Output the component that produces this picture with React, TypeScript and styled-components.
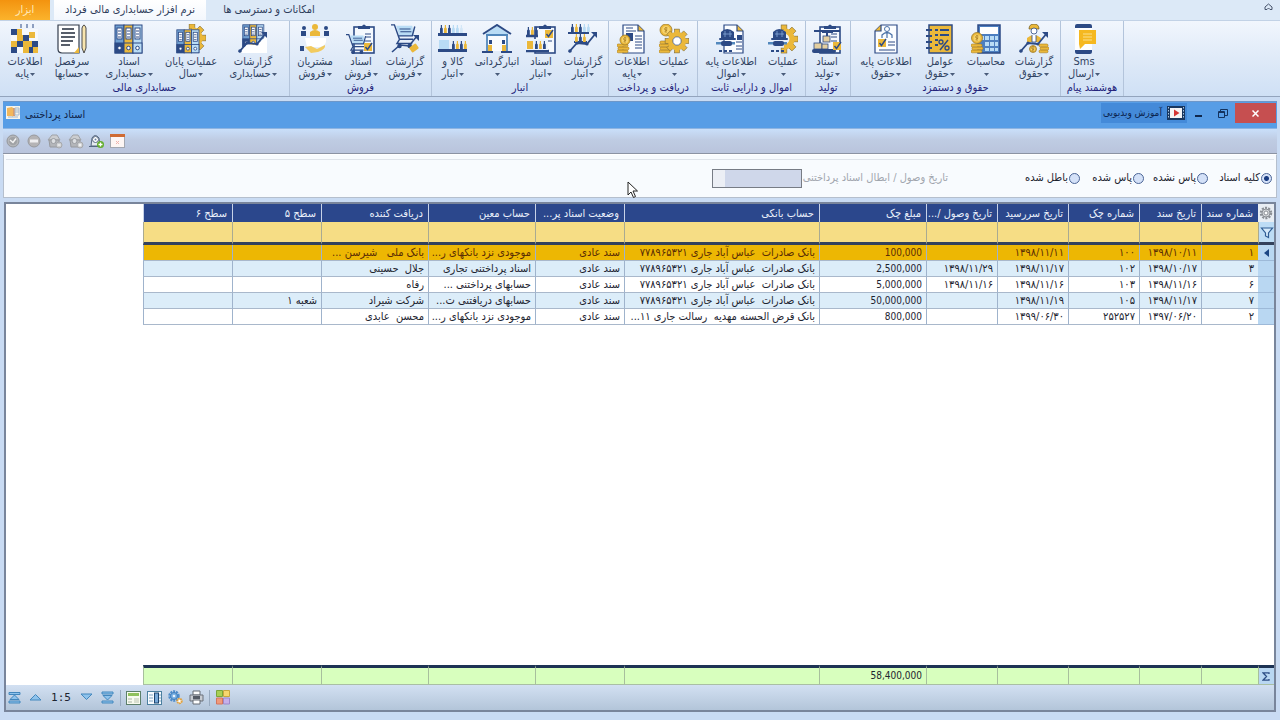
import React from 'react';
import styled, { createGlobalStyle } from 'styled-components';

const NAVY = '#2c4a85';
const GOLD = '#ebb83a';
const SKY = '#b9dcf5';

const GlobalStyle = createGlobalStyle`
  * { box-sizing: border-box; }
  body {
    margin: 0;
    background: #c9dbf3;
    color: #1d2430;
    font-family: 'DejaVu Sans Condensed', 'DejaVu Sans', sans-serif;
    font-size: 11px;
    line-height: 12px;
  }
  button, input { font: inherit; color: inherit; margin: 0; padding: 0; }
`;

const Page = styled.div`
  display: flex;
  flex-direction: column;
  min-height: 100vh;
  padding-bottom: 8px;
`;

/* Ribbon */

const TabBar = styled.nav`
  display: flex;
  align-items: stretch;
  height: 20px;
  background: #dce9f7;
`;

const Tab = styled.button<{ $kind: 'tool' | 'active' | 'plain' }>`
  border: 0;
  white-space: nowrap;
  direction: rtl;
  min-width: ${(p) => (p.$kind === 'tool' ? 50 : p.$kind === 'active' ? 152 : 126)}px;
  margin-right: ${(p) => (p.$kind === 'tool' ? 4 : 0)}px;
  color: ${(p) => (p.$kind === 'tool' ? '#ffe9b8' : '#2e3d5c')};
  background: ${(p) =>
    p.$kind === 'tool'
      ? 'linear-gradient(#f3930f, #fbb32c)'
      : p.$kind === 'active'
        ? 'linear-gradient(#ffffff, #f3f7fd)'
        : 'transparent'};
`;

const CollapseButton = styled.button`
  margin-left: auto;
  width: 24px;
  height: 16px;
  border: 0;
  background: transparent;
`;

const Ribbon = styled.div`
  display: flex;
  height: 77px;
  border-top: 1px solid #c2d2e6;
  border-bottom: 1px solid #93a4bd;
  background: linear-gradient(#f1f6fd, #dfeaf8 50%, #cfe0f5);
`;

const Group = styled.section<{ $width: number }>`
  display: flex;
  flex-direction: column;
  width: ${(p) => p.$width}px;
  flex: none;
  border-right: 1px solid #b3c4db;
`;

const GroupItems = styled.div`
  display: flex;
  height: 60px;
`;

const GroupTitle = styled.h2`
  margin: 0;
  font-size: 11px;
  line-height: 14px;
  font-weight: 400;
  text-align: center;
  color: #23237a;
  direction: rtl;
  white-space: nowrap;
`;

const Item = styled.button<{ $width: number }>`
  display: flex;
  flex-direction: column;
  align-items: center;
  flex: none;
  width: ${(p) => p.$width}px;
  padding-top: 3px;
  border: 0;
  background: transparent;
  color: #2f4261;
  white-space: nowrap;
`;

const ItemIcon = styled.svg`
  width: 30px;
  height: 30px;
  flex: none;
  margin-bottom: 2px;
`;

const ItemLine = styled.span`
  display: flex;
  align-items: center;
  gap: 1px;
  height: 12px;
  line-height: 12px;
`;

const Caret = () => (
  <svg width="5" height="3" viewBox="0 0 5 3" aria-hidden="true">
    <path d="M0 0h5L2.500 3z" fill="#4a5c7a" />
  </svg>
);

/* Drawing parts shared by the ribbon icons */

const Binders = ({ x = 0, y = 0, s = 1 }: { x?: number; y?: number; s?: number }) => (
  <g transform={`translate(${x} ${y}) scale(${s})`} stroke={NAVY} strokeWidth="1">
    {[['#6f9fd0', 1], [GOLD, 10], [SKY, 19]].map(([c, bx]) => (
      <g key={String(bx)}>
        <rect x={bx} y="1" width="9" height="28" fill={String(c)} />
        <rect x={Number(bx) + 2} y="4" width="5" height="11" fill="#fff" />
        <path d={`M${Number(bx) + 3} 7h3M${Number(bx) + 3} 10h3M${Number(bx) + 3} 13h3`} />
        <rect x={Number(bx)} y="19" width="9" height="10" fill={c === '#6f9fd0' ? NAVY : String(c)} />
        <circle cx={Number(bx) + 4.5} cy="24" r="1.800" fill="#fff" />
      </g>
    ))}
  </g>
);

const Clipboard = ({ x = 6, y = 0 }: { x?: number; y?: number }) => (
  <g transform={`translate(${x} ${y})`}>
    <rect x="1" y="3" width="20" height="26" fill="#f5f9fe" stroke={NAVY} strokeWidth="1.600" />
    <path d="M5 5V2h4q2-3 4 0h4v3z" fill={NAVY} />
    <path d="M12 10h6M12 13h6M12 17h6" stroke={NAVY} strokeWidth="1" />
  </g>
);

const Check = ({ x, y }: { x: number; y: number }) => (
  <g transform={`translate(${x} ${y})`}>
    <rect width="8" height="8" fill={GOLD} />
    <path d="M1.500 4l2 2.500L8 0" fill="none" stroke={NAVY} strokeWidth="1.400" />
  </g>
);

const Trend = () => (
  <g>
    <path d="M1 28L9 19l10 1L28 9" fill="none" stroke={NAVY} strokeWidth="1.800" />
    <path d="M23 8h6v6z" fill={NAVY} />
    <circle cx="2" cy="27" r="1.800" fill={NAVY} />
    <circle cx="9" cy="19" r="1.600" fill={NAVY} />
    <circle cx="19" cy="20" r="1.600" fill={NAVY} />
  </g>
);

const Gear = ({ x, y, r, half }: { x: number; y: number; r: number; half?: boolean }) => (
  <g transform={`translate(${x} ${y})`}>
    {(half ? [-90, -45, 0, 45, 90] : [0, 45, 90, 135, 180, 225, 270, 315]).map((a) => (
      <rect key={a} x={r * 0.7} y={-r * 0.22} width={r * 0.38} height={r * 0.44} fill={GOLD} stroke="#7d6a35" strokeWidth="0.600" transform={`rotate(${a})`} />
    ))}
    {half ? (
      <path d={`M0 ${-r * 0.62}A${r * 0.62} ${r * 0.62} 0 0 1 0 ${r * 0.62}`} fill="none" stroke={GOLD} strokeWidth={r * 0.4} />
    ) : (
      <circle r={r * 0.6} fill="#fff" stroke={GOLD} strokeWidth={r * 0.46} />
    )}
    {!half && <circle r={r * 0.38} fill="#fff" stroke={NAVY} strokeWidth="0.700" />}
  </g>
);

const Coins = ({ x, y, n = 3, w = 11 }: { x: number; y: number; n?: number; w?: number }) => (
  <g>
    {Array.from({ length: n }, (_, i) => (
      <rect key={i} x={x + (i % 2)} y={y - i * 3} width={w} height="2.800" rx="1.300" fill={GOLD} stroke="#a87c1c" strokeWidth="0.600" />
    ))}
  </g>
);

const Coin = ({ x, y, r }: { x: number; y: number; r: number }) => (
  <g>
    <circle cx={x} cy={y} r={r} fill={GOLD} stroke="#9b7a2b" strokeWidth="0.800" />
    <circle cx={x} cy={y} r={r * 0.65} fill="#f7d36b" />
    <path d={`M${x + 1.5} ${y - 2}q-3-1-3 .8t2 1.200t-2 1.800M${x} ${y - 3}v6`} fill="none" stroke="#a87c1c" strokeWidth="0.700" />
  </g>
);

const Bottles = ({ x, y, c }: { x: number; y: number; c: string[] }) => (
  <g transform={`translate(${x} ${y})`}>
    {c.map((f, i) => (
      <path key={i} d={`M${i * 4 + 1} 8V3.500l.8-1V0h1.200v2.500l.8 1V8z`} fill={f} />
    ))}
  </g>
);

const Doc = ({ x = 3, y = 0, w = 22, fold = 'right' }: { x?: number; y?: number; w?: number; fold?: string }) => (
  <g transform={`translate(${x} ${y})`} stroke={NAVY} strokeWidth="1.200" fill="#fbfdff">
    {fold === 'right' ? (
      <>
        <path d={`M1 1h${w - 8}l6 6v22H1z`} />
        <path d={`M${w - 7} 1v6h6`} fill={GOLD} />
      </>
    ) : (
      <>
        <path d={`M7 1h${w - 8}v28H1V7z`} />
        <path d="M7 1v6H1" fill={GOLD} />
      </>
    )}
  </g>
);

const Helmet = ({ x, y }: { x: number; y: number }) => (
  <g transform={`translate(${x} ${y})`} fill={NAVY}>
    <path d="M2 10V4q6-6 13 0v6z" />
    <rect x="0" y="10" width="17" height="2" rx="1" />
    <path d="M6 3v6M11 3v6M4 6h9" stroke="#85a8d8" strokeWidth="0.800" />
    <rect x="-3" y="14" width="19" height="2.500" fill="#5288bd" />
    <rect x="2" y="13" width="11" height="5" rx="2" />
    <path d="M0 22h3v2H0zM5 22h3v2H5zM10 22h3v2h-3z" />
  </g>
);

const Cart = ({ x, y, s = 1 }: { x: number; y: number; s?: number }) => (
  <g transform={`translate(${x} ${y}) scale(${s})`} fill="none" stroke={NAVY} strokeWidth="1.700">
    <path d="M6 2h19l2 12H10z" fill={SKY} stroke="none" />
    <path d="M0 1h4l6 17h16M9 14h16L28 3M10 18l-3 5h18" />
    <path d="M10 6h13M11 9h13" strokeWidth="1.200" />
    <circle cx="10" cy="26" r="1.800" fill={NAVY} />
    <circle cx="22" cy="26" r="1.800" fill={NAVY} />
  </g>
);

const icons: Record<string, React.ReactNode> = {
  mosaic: (
    <g>
      <rect x="1" y="5" width="27" height="24" fill="#f5f8fc" />
      <path d="M1 5h6v6H1zM7 17h6v6H7zM13 11h6v6h-6zM22 17h6v6h-6zM1 23h6v6H1zM19 23h4v6h-4z" fill={NAVY} />
      <path d="M7 11h6v6H7zM1 17h6v6H1zM13 17h9v6h-9zM19 8h6v6h-6zM13 23h6v6h-6zM7 5h5v6H7zM23 23h5v6h-5z" fill={GOLD} />
      <path d="M11 0v4M17 0v4M23 0v4" stroke={NAVY} strokeWidth="1" />
    </g>
  ),
  ledger: (
    <g>
      <path d="M1 1h21v28H5q-4 0-4-4z" fill="#fff" stroke="#333c4c" strokeWidth="1.200" />
      <path d="M5 5h12M4 9h14M4 13h14M4 17h12M4 21h9" stroke="#222b3b" strokeWidth="1.500" />
      <path d="M17 29l5-6v6z" fill={GOLD} />
      <path d="M25 4q2-6 4 0v20l-2 5-2-5z" fill="#f8e5ae" stroke="#4b4b4b" strokeWidth="1" />
    </g>
  ),
  binders: <Binders />,
  yearEnd: (
    <g>
      <Gear x={16} y={14} r={13} half />
      <Binders x={0} y={5} s={0.82} />
    </g>
  ),
  accReports: (
    <g>
      <Binders x={4} y={0} s={0.78} />
      <path d="M2 29L9 20l10 1L29 11V29z" fill="#fff" />
      <Trend />
    </g>
  ),
  customers: (
    <g>
      <g fill={NAVY}><circle cx="4" cy="4" r="2" /><path d="M1 7h5v5H1z" /><circle cx="26" cy="4" r="2" /><path d="M24 7h5v5h-5z" /></g>
      <g fill={GOLD}><circle cx="15" cy="3" r="3" /><path d="M10 8q5-4 10 0v4H10z" /></g>
      <path d="M5 14h21q1 8-6 9H7z" fill="#fff" />
      <path d="M5 23l6-1 6 3 8-4q1 4-7 7l-7 1z" fill="#f2cb5f" />
      <path d="M0 22h4v5H0z" fill={NAVY} />
    </g>
  ),
  saleDocs: (
    <g><Clipboard x={7} /><Cart x={0} y={10} s={0.7} /><Check x={18} y={19} /></g>
  ),
  saleReports: (
    <g><Cart x={1} y={0} s={0.85} /><path d="M2 28l8-7 9 1 8-10" fill="none" stroke={NAVY} strokeWidth="1.600" /><path d="M23 11h6v6z" fill={NAVY} /><rect x="20" y="21" width="8" height="6" rx="1" fill={GOLD} transform="rotate(-35 24 24)" /></g>
  ),
  shelf: (
    <g>
      <Bottles x={1} y={1} c={[NAVY, GOLD, NAVY, SKY, SKY, '#d4e7f7']} />
      <rect x="0" y="9" width="29" height="3" fill={NAVY} />
      <rect x="1" y="16" width="10" height="9" fill={SKY} />
      <Bottles x={13} y={17} c={[NAVY, GOLD, NAVY, GOLD]} />
      <rect x="0" y="25" width="29" height="3" fill={NAVY} />
    </g>
  ),
  warehouse: (
    <g>
      <path d="M3 10L15 2l12 8z" fill={SKY} />
      <path d="M1 10L15 1l14 9" fill="none" stroke={NAVY} strokeWidth="2" />
      <rect x="4" y="11" width="22" height="16" fill="#f9fbfe" />
      <path d="M4 11h22M5 11v17M25 11v17" stroke="#5187bb" strokeWidth="1.800" />
      <path d="M7 16h3v4H7zM20 16h3v4h-3z" fill={NAVY} />
      <path d="M6 21h4v6H6zM20 21h4v6h-4z" fill={GOLD} />
      <path d="M0 28h11M19 28h11" stroke={NAVY} strokeWidth="2" />
    </g>
  ),
  stockDocs: (
    <g>
      <Clipboard x={8} />
      <Bottles x={0} y={3} c={[NAVY, GOLD, NAVY]} />
      <path d="M0 12h12M0 27h23" stroke={NAVY} strokeWidth="2.500" />
      <rect x="0" y="15" width="22" height="11" fill="#eaf3fc" /><rect x="1" y="17" width="6" height="8" fill={GOLD} />
      <Bottles x={8} y={17} c={[NAVY, GOLD, NAVY]} /><Check x={19} y={6} />
    </g>
  ),
  stockReports: (
    <g>
      <Bottles x={2} y={0} c={[NAVY, GOLD, NAVY, SKY, SKY]} />
      <path d="M0 9h21M6 18h13" stroke={NAVY} strokeWidth="2" />
      <Bottles x={6} y={10} c={[GOLD, NAVY, GOLD]} /><Trend />
    </g>
  ),
  cashDoc: (
    <g>
      <Doc x={5} w={23} />
      <path d="M9 4h7M9 7h10M18 12h7M18 15h7M18 18h7M18 21h7M18 24h7" stroke={NAVY} strokeWidth="1" />
      <rect x="9" y="9" width="7" height="8" fill={NAVY} />
      <Coins x={0} y={26} n={3} /><Coin x={8} y={16} r={5} />
    </g>
  ),
  cashOps: (
    <g><Coins x={0} y={26} n={4} /><Coin x={7} y={6} r={6} /><Gear x={18} y={17} r={11} /></g>
  ),
  assetDoc: (
    <g><Doc x={7} w={21} /><path d="M20 18h6M20 22h6M20 25h6" stroke={NAVY} /><rect x="21" y="11" width="5" height="5" fill={NAVY} /><Helmet x={3} y={4} /></g>
  ),
  assetOps: (
    <g><Gear x={16} y={15} r={13} half /><Helmet x={3} y={4} /></g>
  ),
  production: (
    <g>
      <Clipboard x={7} />
      <rect x="2" y="6" width="26" height="2" fill={NAVY} />
      <path d="M15 7v5M10 8h11" stroke={NAVY} strokeWidth="2" />
      <g fill="#e4cf9f" stroke={NAVY} strokeWidth="0.800"><rect x="11" y="12" width="7" height="6" /><rect x="2" y="19" width="8" height="6" /><rect x="10" y="20" width="6" height="5" /></g>
      <rect x="0" y="25" width="24" height="4" rx="2" fill={NAVY} /><Check x={21} y={18} />
    </g>
  ),
  payrollInfo: (
    <g>
      <Doc x={3} w={24} fold="left" />
      <circle cx="16" cy="5" r="2.500" fill="none" stroke="#4b72a8" /><path d="M11 14v-3q5-5 10 0v3M16 9v5" fill="none" stroke="#4b72a8" strokeWidth="1.200" />
      <Check x={7} y={15} /><path d="M17 18h7M17 21h7M8 26h16" stroke={NAVY} />
    </g>
  ),
  factors: (
    <g>
      <rect x="4" y="1" width="23" height="28" fill={GOLD} stroke={NAVY} strokeWidth="1.500" />
      <path d="M1 6h6M1 12h6M1 18h6M1 24h6" stroke={NAVY} strokeWidth="2" />
      <path d="M10 6h3M15 6h9M10 11h3M15 11h9M10 16h3M10 21h3" stroke={NAVY} strokeWidth="1.800" />
      <path d="M23 16l-8 10" stroke={NAVY} strokeWidth="1.500" /><circle cx="16" cy="18" r="2" fill="none" stroke={NAVY} strokeWidth="1.300" /><circle cx="22" cy="24" r="2" fill="none" stroke={NAVY} strokeWidth="1.300" />
    </g>
  ),
  calculator: (
    <g>
      <rect x="7" y="1" width="22" height="28" fill="#4d7fc0" stroke={NAVY} strokeWidth="1.500" />
      <rect x="9" y="3" width="18" height="7" fill="#fff" />
      <path d="M9 12h4v4H9zM14 12h4v4h-4zM19 12h4v4h-4zM24 12h3v4h-3zM14 18h4v4h-4zM19 18h4v4h-4zM24 18h3v4h-3zM14 24h4v3h-4zM19 24h4v3h-4zM24 24h3v3h-3z" fill="#b9dcf5" />
      <Coins x={0} y={26} n={3} /><Coin x={6} y={14} r={5.5} />
    </g>
  ),
  payReports: (
    <g>
      <path d="M10 5q0-5 5-5t5 5z" fill={GOLD} stroke="#6b5721" strokeWidth="0.700" /><circle cx="15" cy="7" r="3" fill="#fff" stroke={NAVY} strokeWidth="0.800" />
      <path d="M8 18v-4q7-6 14 0v4z" fill={GOLD} /><path d="M13 11v7h4v-7" fill="#fff" stroke={NAVY} strokeWidth="0.800" />
      <Trend /><Coin x={14} y={25} r={3.5} /><Coins x={20} y={26} n={3} w={9} />
    </g>
  ),
  phone: (
    <g>
      <rect x="6" y="0" width="17" height="30" rx="2" fill="#fdfeff" />
      <path d="M6 4V2q0-2 2-2h13q2 0 2 2v2zM6 26h17v2q0 2-2 2H8q-2 0-2-2z" fill={NAVY} />
      <path d="M10 6h17v14H16l-5 5-1-5z" fill="#f5b820" /><path d="M14 10h9M14 13h9M14 16h9" stroke="#fbe08e" strokeWidth="1" />
    </g>
  ),
};

type RibbonItem = [icon: string, width: number, first: string, second?: string];

const groups: { title: string; width: number; items: RibbonItem[] }[] = [
  { title: 'حسابداری مالی', width: 290, items: [['mosaic', 50, 'اطلاعات', 'پایه'], ['ledger', 44, 'سرفصل', 'حسابها'], ['binders', 70, 'اسناد', 'حسابداری'], ['yearEnd', 54, 'عملیات پایان', 'سال'], ['accReports', 70, 'گزارشات', 'حسابداری']] },
  { title: 'فروش', width: 142, items: [['customers', 50, 'مشتریان', 'فروش'], ['saleDocs', 42, 'اسناد', 'فروش'], ['saleReports', 46, 'گزارشات', 'فروش']] },
  { title: 'انبار', width: 177, items: [['shelf', 42, 'کالا و', 'انبار'], ['warehouse', 46, 'انبارگردانی'], ['stockDocs', 42, 'اسناد', 'انبار'], ['stockReports', 42, 'گزارشات', 'انبار']] },
  { title: 'دریافت و پرداخت', width: 89, items: [['cashDoc', 46, 'اطلاعات', 'پایه'], ['cashOps', 38, 'عملیات']] },
  { title: 'اموال و دارایی ثابت', width: 108, items: [['assetDoc', 66, 'اطلاعات پایه', 'اموال'], ['assetOps', 38, 'عملیات']] },
  { title: 'تولید', width: 45, items: [['production', 42, 'اسناد', 'تولید']] },
  { title: 'حقوق و دستمزد', width: 210, items: [['payrollInfo', 70, 'اطلاعات پایه', 'حقوق'], ['factors', 38, 'عوامل', 'حقوق'], ['calculator', 54, 'محاسبات'], ['payReports', 42, 'گزارشات', 'حقوق']] },
  { title: 'هوشمند پیام', width: 63, items: [['phone', 46, 'Sms', 'ارسال']] },
];

/* Document window */

const Window = styled.main`
  display: flex;
  flex-direction: column;
  flex: 1;
  margin: 4px 3px 0;
`;

const TitleBar = styled.header`
  display: flex;
  align-items: flex-start;
  height: 28px;
  padding: 1px 1px 0 3px;
  background: #579de6;
  border-top: 1px solid #6d97c9;
  border-bottom: 1px solid #8db4e2;
`;

const Title = styled.h1`
  margin: 5px auto 0 5px;
  font-size: 11px;
  line-height: 14px;
  font-weight: 400;
  color: #10254a;
  direction: rtl;
`;

const TitleIcon = styled.svg`
  margin-top: 3px;
`;

const VideoButton = styled.button`
  display: flex;
  align-items: center;
  justify-content: space-between;
  width: 86px;
  height: 20px;
  padding: 0 2px;
  border: 0;
  background: #448ad9;
  color: #0c2550;
  font-size: 10px;
  white-space: nowrap;
`;

const WindowButton = styled.button<{ $close?: boolean }>`
  display: flex;
  align-items: center;
  justify-content: center;
  width: ${(p) => (p.$close ? 41 : 24)}px;
  height: 20px;
  border: 0;
  background: ${(p) => (p.$close ? '#c64f50' : 'transparent')};
`;

const ToolBar = styled.div`
  display: flex;
  align-items: center;
  gap: 4px;
  height: 25px;
  padding-left: 1px;
  background: linear-gradient(#c9dffa, #bfcce3 45%, #b9c4dc);
  border-bottom: 1px solid #8b93a3;
`;

const IconButton = styled.button`
  display: flex;
  align-items: center;
  justify-content: center;
  flex: none;
  width: 17px;
  height: 18px;
  border: 0;
  background: transparent;
`;

const FilterPanel = styled.form`
  position: relative;
  display: flex;
  align-items: center;
  direction: rtl;
  height: 44px;
  padding: 4px 4px 0;
  background: #f8fbfe;
  border: 1px solid #b5bfcd;
  border-top-color: #fff;
`;

const FilterRule = styled.div`
  position: absolute;
  inset: 4px 2px auto;
  border-top: 1px solid #dfe4ea;
`;

const Option = styled.label`
  display: flex;
  align-items: center;
  gap: 1px;
  width: 64px;
  white-space: nowrap;
`;

const Radio = styled.input`
  appearance: none;
  flex: none;
  width: 11px;
  height: 11px;
  border: 1px solid #4b6596;
  border-radius: 50%;
  background: #d4e1f8;
  &:checked {
    background: radial-gradient(circle, #173a80 0 2px, #d4e1f8 3px);
  }
`;

const DateLabel = styled.label`
  margin-right: 68px;
  margin-left: 2px;
  width: 144px;
  color: #a1a6ae;
  white-space: nowrap;
`;

const DateInput = styled.input`
  width: 90px;
  height: 19px;
  border: 1px solid #777c85;
  background: linear-gradient(to right, #eceff5 12px, #cfd7ea 12px);
`;

const Pointer = styled.svg`
  position: absolute;
  left: 49%;
  top: 26px;
  z-index: 2;
`;

const GridPanel = styled.section`
  display: flex;
  flex-direction: column;
  flex: 1;
  margin: 4px 1px 0;
  border: 2px solid #79859b;
  background: #fff;
`;

const GridBody = styled.div`
  flex: 1;
  direction: rtl;
`;

const TotalsStrip = styled.div`
  direction: rtl;
`;

const Table = styled.table`
  direction: rtl;
  table-layout: fixed;
  width: 1131px;
  border-collapse: separate;
  border-spacing: 0;
`;

const HeadCell = styled.th`
  height: 18px;
  padding: 1px 5px 0;
  border-left: 1px solid #c7d2e8;
  background: #2b478c;
  color: #e9effa;
  font-weight: 400;
  text-align: right;
  white-space: pre;
  overflow: hidden;
`;

const CornerCell = styled.th`
  padding: 0;
  background: #e8edf3;
  line-height: 0;
`;

const FilterCell = styled.td<{ $mark?: boolean }>`
  height: 23px;
  padding: 0;
  background: ${(p) => (p.$mark ? '#bddcf5' : '#f6dd85')};
  border-left: 1px solid #a9aa92;
  border-bottom: 3px solid #33415c;
  line-height: 0;
`;

const FilterInput = styled.input`
  display: block;
  width: 100%;
  height: 19px;
  border: 0;
  background: transparent;
`;

const Row = styled.tr<{ $tone: 'selected' | 'alt' | 'plain' }>`
  background: ${(p) => (p.$tone === 'selected' ? '#edb703' : p.$tone === 'alt' ? '#dcedf9' : '#ffffff')};
  color: ${(p) => (p.$tone === 'selected' ? '#5a2d05' : '#1d2430')};
`;

const Cell = styled.td`
  height: 16px;
  padding: 0 4px;
  border-left: 1px solid #9fb3cc;
  border-bottom: 1px solid #a9b8cb;
  line-height: 15px;
  text-align: right;
  white-space: pre;
  overflow: hidden;
`;

const MarkCell = styled.th`
  padding: 0;
  background: #b9d7f2;
  border-bottom: 1px solid #9db9d8;
  line-height: 0;
`;

const Amount = styled.span`
  font-size: 10px;
  direction: ltr;
`;

const TotalCell = styled.td<{ $mark?: boolean }>`
  height: 20px;
  padding: 0 4px;
  border-top: 3px solid #1d3354;
  border-left: 1px solid #a7bf9d;
  border-bottom: 1px solid #a9bfa4;
  background: ${(p) => (p.$mark ? '#b9d7f2' : '#d8ffbe')};
  text-align: right;
  vertical-align: middle;

  svg { display: block; }
`;

const Navigator = styled.footer`
  display: flex;
  align-items: center;
  gap: 4px;
  height: 25px;
  background: linear-gradient(#d2e0f2, #b3c5d9);
`;

const Counter = styled.output`
  width: 26px;
  text-align: center;
  white-space: nowrap;
  font-family: 'DejaVu Sans Mono', monospace;
`;

const Divider = styled.span`
  width: 1px;
  height: 16px;
  background: #98aabf;
`;

const Nav = ({ label, d }: { label: string; d: string }) => (
  <IconButton type="button" aria-label={label}>
    <svg width="13" height="13" viewBox="0 0 13 13">
      <path d={d} fill="#8fc3ec" stroke="#4387bd" strokeWidth="1" />
    </svg>
  </IconButton>
);

const widths = [16, 57, 62, 71, 71, 71, 107, 195, 89, 107, 107, 89, 89];
const heads = ['شماره سند', 'تاریخ سند', 'شماره چک', 'تاریخ سررسید', 'تاریخ وصول /...', 'مبلغ چک', 'حساب بانکی', 'وضعیت اسناد پر...', 'حساب معین', 'دریافت کننده', 'سطح ۵', 'سطح ۶'];
const BANK = 'بانک صادرات  عباس آباد جاری ۷۷۸۹۶۵۳۲۱';
const rows = [
  ['۱', '۱۳۹۸/۱۰/۱۱', '۱۰۰', '۱۳۹۸/۱۱/۱۱', '', '100,000', BANK, 'سند عادی', 'موجودی نزد بانکهای ر...', 'بانک ملی   شیرسن ...', '', ''],
  ['۳', '۱۳۹۸/۱۰/۱۷', '۱۰۲', '۱۳۹۸/۱۱/۱۷', '۱۳۹۸/۱۱/۲۹', '2,500,000', BANK, 'سند عادی', 'اسناد پرداختنی تجاری', 'جلال  حسینی', '', ''],
  ['۶', '۱۳۹۸/۱۱/۱۶', '۱۰۳', '۱۳۹۸/۱۱/۱۶', '۱۳۹۸/۱۱/۱۶', '5,000,000', BANK, 'سند عادی', 'حسابهای پرداختنی ...', 'رفاه', '', ''],
  ['۷', '۱۳۹۸/۱۱/۱۷', '۱۰۵', '۱۳۹۸/۱۱/۱۹', '', '50,000,000', BANK, 'سند عادی', 'حسابهای دریافتنی ت...', 'شرکت شیراد', 'شعبه ۱', ''],
  ['۲', '۱۳۹۷/۰۶/۲۰', '۲۵۲۵۲۷', '۱۳۹۹/۰۶/۳۰', '', '800,000', 'بانک قرض الحسنه مهدیه  رسالت جاری ۱۱...', 'سند عادی', 'موجودی نزد بانکهای ر...', 'محسن  عابدی', '', ''],
];

const Columns = () => (
  <colgroup>
    {widths.map((w, i) => (
      <col key={i} width={w} />
    ))}
  </colgroup>
);

export default function App() {
  return (
    <Page>
      <GlobalStyle />
      <TabBar>
        <Tab $kind="tool">ابزار</Tab>
        <Tab $kind="active">نرم افزار حسابداری مالی فرداد</Tab>
        <Tab $kind="plain">امکانات و دسترسی ها</Tab>
        <CollapseButton aria-label="جمع کردن">
          <svg width="9" height="8" viewBox="0 0 9 8" fill="none" stroke="#46536b">
            <path d="M1 4l3.500-3L8 4v2.500H6L4.500 5 3 6.500H1z" />
          </svg>
        </CollapseButton>
      </TabBar>
      <Ribbon>
        {groups.map((g) => (
          <Group key={g.title} $width={g.width}>
            <GroupItems>
              {g.items.map(([icon, width, first, second]) => (
                <Item key={icon} $width={width}>
                  <ItemIcon viewBox="0 0 30 30" aria-hidden="true">{icons[icon]}</ItemIcon>
                  <ItemLine dir="auto">{first}</ItemLine>
                  <ItemLine>
                    {second && <span>{second}</span>}
                    <Caret />
                  </ItemLine>
                </Item>
              ))}
            </GroupItems>
            <GroupTitle>{g.title}</GroupTitle>
          </Group>
        ))}
      </Ribbon>

      <Window>
        <TitleBar>
          <TitleIcon width="14" height="13" viewBox="0 0 14 13">
            <rect width="14" height="13" fill="#f6f3ea" />
            <path d="M1 10V2l5-1 1 1v9L6 10z" fill="#f2b75b" />
            <path d="M7 2h2v8H7z" fill="#d99b6c" />
            <path d="M9 2h4v7H9zM9 4h4M9 6h4M2 11h10" stroke="#a4b9cf" fill="none" />
          </TitleIcon>
          <Title>اسناد پرداختنی</Title>
          <VideoButton type="button">
            <span dir="rtl">آموزش ویدیویی</span>
            <svg width="18" height="14" viewBox="0 0 18 14">
              <rect width="18" height="14" fill="#19375f" />
              <rect x="3" y="2" width="12" height="10" fill="#f4f4f6" />
              <path d="M7 3.500L12.500 7 7 10.500z" fill="#d43535" />
              <path d="M1.500 1v12M16.500 1v12" stroke="#a9c6e4" strokeDasharray="1.500 1.500" />
            </svg>
          </VideoButton>
          <WindowButton type="button" aria-label="کوچک کردن">
            <svg width="8" height="12" viewBox="0 0 8 12"><rect y="8" width="7" height="2" fill="#10284d" /></svg>
          </WindowButton>
          <WindowButton type="button" aria-label="بازگرداندن">
            <svg width="10" height="9" viewBox="0 0 10 9" fill="none" stroke="#14335e">
              <path d="M.5 2.500h6v6h-6zM2.500 2.500v-2h7v6h-3M.5 3.500h6" />
            </svg>
          </WindowButton>
          <WindowButton type="button" $close aria-label="بستن">
            <svg width="7" height="7" viewBox="0 0 7 7"><path d="M.5.5l6 6M6.500.5l-6 6" stroke="#fff" strokeWidth="1.500" /></svg>
          </WindowButton>
        </TitleBar>

        <ToolBar>
          <IconButton type="button" aria-label="تایید">
            <svg width="14" height="14" viewBox="0 0 14 14"><circle cx="7" cy="7" r="6" fill="#b4b6b9" stroke="#94979c" /><circle cx="7" cy="7" r="4" fill="#a0a2a5" /><path d="M4 6l3 2.500 3-4" fill="none" stroke="#f2f2f2" strokeWidth="1.500" /></svg>
          </IconButton>
          <IconButton type="button" aria-label="حذف">
            <svg width="14" height="14" viewBox="0 0 14 14"><circle cx="7" cy="7" r="6" fill="#b4b3b5" stroke="#98999d" /><rect x="3" y="5.500" width="8" height="3" fill="#eeeef0" /></svg>
          </IconButton>
          {['برداشتن', 'افزودن'].map((label, i) => (
            <IconButton key={label} type="button" aria-label={label}>
              <svg width="16" height="15" viewBox="0 0 16 15"><path d="M1 6l4-5h5l3 5z" fill="#cbcdd0" stroke="#9fa2a7" /><path d="M2 6h10v7H3z" fill="#b4b6ba" stroke="#97999e" /><circle cx="6.500" cy="7" r="2.500" fill="#dddfe2" stroke="#999ca1" /><circle cx="12" cy="11" r="3" fill="#c9cbce" stroke="#a6a8ac" />{i === 0 ? <path d="M10.500 11h3" stroke="#fff" /> : <path d="M10.500 11h3M12 9.500v3" stroke="#fff" />}</svg>
            </IconButton>
          ))}
          <IconButton type="button" aria-label="سند جدید">
            <svg width="15" height="15" viewBox="0 0 15 15"><path d="M2 12L3 4q3-5 7 0l1 8z" fill="#e6ebf0" stroke="#546680" /><circle cx="6.500" cy="5.500" r="3" fill="#fff" stroke="#546680" /><circle cx="6.500" cy="5.500" r="1" fill="#6c82a0" /><path d="M0 12.500h12" stroke="#546680" /><circle cx="11.500" cy="10.500" r="3.500" fill="#63ad2d" /><path d="M9.500 10.500h4M11.500 8.500v4" stroke="#fff" strokeWidth="1.300" /></svg>
          </IconButton>
          <IconButton type="button" aria-label="بستن فرم">
            <svg width="15" height="14" viewBox="0 0 15 14"><rect x=".5" y=".5" width="14" height="13" fill="#fdf6f4" stroke="#a3a7b0" /><rect width="15" height="3" fill="#cf6b33" /><path d="M6 7l3 3M9 7l-3 3" stroke="#efb3ac" /></svg>
          </IconButton>
        </ToolBar>

        <FilterPanel>
          <FilterRule />
          {['کلیه اسناد', 'پاس نشده', 'پاس شده', 'باطل شده'].map((label, i) => (
            <Option key={label}>
              <Radio type="radio" name="status" defaultChecked={i === 0} />
              {label}
            </Option>
          ))}
          <DateLabel htmlFor="due">تاریخ وصول / ابطال اسناد پرداختنی</DateLabel>
          <DateInput id="due" type="text" disabled />
          <Pointer width="12" height="18" viewBox="0 0 12 18" aria-hidden="true">
            <path d="M1 1v13l3-3 2.500 5.500 2-1L6 10h4.500z" fill="#fff" stroke="#222" />
          </Pointer>
        </FilterPanel>

        <GridPanel>
          <GridBody>
            <Table>
              <Columns />
              <thead>
                <tr>
                  <CornerCell aria-label="تنظیمات">
                    <svg width="14" height="14" viewBox="0 0 14 14" fill="none" stroke="#8b8f95"><circle cx="7" cy="7" r="5" strokeWidth="2.500" strokeDasharray="2 1.140" /><circle cx="7" cy="7" r="4" fill="#d6d9dc" /><circle cx="7" cy="7" r="2" fill="#fff" /></svg>
                  </CornerCell>
                  {heads.map((h) => <HeadCell key={h} scope="col">{h}</HeadCell>)}
                </tr>
                <tr>
                  <FilterCell $mark>
                    <svg width="14" height="13" viewBox="0 0 14 13"><path d="M1.500 2h11L8.500 7v4.500l-3-1.500V7z" fill="#d4e9fa" stroke="#2e5c94" strokeWidth="1.200" /></svg>
                  </FilterCell>
                  {heads.map((h) => <FilterCell key={h}><FilterInput type="text" aria-label={h} /></FilterCell>)}
                </tr>
              </thead>
              <tbody>
                {rows.map((r, i) => (
                  <Row key={i} $tone={i === 0 ? 'selected' : i % 2 ? 'alt' : 'plain'}>
                    <MarkCell scope="row">
                      {i === 0 && <svg width="5" height="8" viewBox="0 0 5 8" role="img" aria-label="سطر جاری"><path d="M5 0v8L0 4z" fill="#1c4684" /></svg>}
                    </MarkCell>
                    {r.map((c, j) => <Cell key={j}>{j === 5 ? <Amount>{c}</Amount> : c}</Cell>)}
                  </Row>
                ))}
              </tbody>
            </Table>
          </GridBody>
          <TotalsStrip>
            <Table>
              <Columns />
              <tbody>
                <tr>
                  <TotalCell $mark aria-label="جمع">
                    <svg width="8" height="9" viewBox="0 0 8 9"><path d="M7 2V.8H1L4.500 4.500 1 8.200h6V7" fill="none" stroke="#2e4f86" strokeWidth="1.300" /></svg>
                  </TotalCell>
                  {heads.map((h, j) => <TotalCell key={h}>{j === 5 && <Amount>58,400,000</Amount>}</TotalCell>)}
                </tr>
              </tbody>
            </Table>
          </TotalsStrip>
          <Navigator>
            <Nav label="اولین" d="M1 1.500h11v2H1zM6.500 4L11 8.500H2zM1 10h11v2H1z" />
            <Nav label="قبلی" d="M6.500 3.500L12 9H1z" />
            <Counter>1:5</Counter>
            <Nav label="بعدی" d="M6.500 8.500L12 3H1z" />
            <Nav label="آخرین" d="M1 1h11v2H1zM6.500 9L11 4.500H2zM1 10h11v2H1z" />
            <Divider />
            <IconButton type="button" aria-label="فرم">
              <svg width="15" height="14" viewBox="0 0 15 14"><rect x=".5" y=".5" width="14" height="13" fill="#f7faef" stroke="#5c7f6a" /><rect x="2" y="2" width="11" height="3" fill="#8fc15c" /><path d="M2 8h4M2 11h4" stroke="#a9b4a4" /><rect x="8" y="7" width="5" height="5" fill="#d9dfd0" /></svg>
            </IconButton>
            <IconButton type="button" aria-label="ستونها">
              <svg width="15" height="14" viewBox="0 0 15 14"><rect x=".5" y=".5" width="14" height="13" fill="#f7fbff" stroke="#4c80a0" /><path d="M2 4h4M2 7h4M2 10h4M12 4h2M12 7h2M12 10h2" stroke="#80a5c2" /><rect x="7.500" y="2" width="4" height="10" fill="#77a8d8" stroke="#1c446e" /></svg>
            </IconButton>
            <IconButton type="button" aria-label="تنظیمات">
              <svg width="15" height="15" viewBox="0 0 15 15" fill="none"><circle cx="6" cy="6" r="4.500" stroke="#4d8ccb" strokeWidth="2.500" strokeDasharray="2 .830" /><circle cx="6" cy="6" r="3.500" fill="#77afe2" stroke="#3f7dbb" /><circle cx="6" cy="6" r="1.300" fill="#e8f2fb" /><circle cx="11.500" cy="11" r="2.200" fill="#fff" stroke="#e3a33e" strokeWidth="2" strokeDasharray="1.500 .5" /></svg>
            </IconButton>
            <IconButton type="button" aria-label="چاپ">
              <svg width="15" height="15" viewBox="0 0 15 15"><path d="M4 1h7v4H4z" fill="#fff" stroke="#666c75" /><path d="M1 5h13v6H1z" fill="#c8ccd2" stroke="#6b717b" /><path d="M4 6h7v3H4z" fill="#555b65" /><path d="M4 10h7v4H4z" fill="#fff" stroke="#666c75" /></svg>
            </IconButton>
            <Divider />
            <IconButton type="button" aria-label="نماها">
              <svg width="14" height="15" viewBox="0 0 14 15" strokeWidth="1"><path d="M.5.5h6v6h-6z" fill="#a8cf55" stroke="#7ba53a" /><path d="M7.500.5h6v6h-6z" fill="#f6d76e" stroke="#c9a73e" /><path d="M.5 8h6v6h-6z" fill="#f09a7a" stroke="#d4745c" /><path d="M7.500 8h6v6h-6z" fill="#c6b0ea" stroke="#9c88c8" /></svg>
            </IconButton>
          </Navigator>
        </GridPanel>
      </Window>
    </Page>
  );
}
